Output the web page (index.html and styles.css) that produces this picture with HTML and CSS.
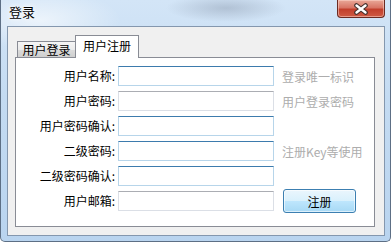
FILE: index.html
```html
<!DOCTYPE html>
<html lang="zh-CN">
<head>
  <meta charset="UTF-8" />
  <title>登录</title>
  <link rel="stylesheet" href="styles.css">
</head>
<body>
  <div class="window">
    <div class="titlebar">
      <span class="title">登录</span>
      <span class="close">
        <svg width="16" height="12" viewBox="0 0 16 12">
          <path d="M3.5 2.5 L12.5 9.5 M12.5 2.5 L3.5 9.5" stroke="#43302d" stroke-width="4.6" stroke-linecap="round"/>
          <path d="M3.5 2.5 L12.5 9.5 M12.5 2.5 L3.5 9.5" stroke="#fff" stroke-width="2.4" stroke-linecap="round"/>
        </svg>
      </span>
    </div>

    <div class="client">
      <div class="tabs">
        <div class="tab">用户登录</div>
        <div class="tab active">用户注册</div>
      </div>

      <div class="panel">
        <div class="form">
          <label>用户名称:</label>
          <input type="text" class="blue">
          <span class="hint">登录唯一标识</span>

          <label>用户密码:</label>
          <input type="password">
          <span class="hint">用户登录密码</span>

          <label>用户密码确认:</label>
          <input type="password" class="blue">
          <span></span>

          <label>二级密码:</label>
          <input type="password" class="blue">
          <span class="hint">注册Key等使用</span>

          <label>二级密码确认:</label>
          <input type="password" class="blue">
          <span></span>

          <label>用户邮箱:</label>
          <input type="text">
          <button>注册</button>
        </div>
      </div>
    </div>
  </div>
</body>
</html>
```

FILE: styles.css
```css
body {
  margin: 0;
  padding: 0;
  font-family: "Noto Sans CJK SC", "Liberation Sans", sans-serif;
  font-size: 12px;
  background: #fff;
}

.window {
  width: 391px;
  height: 242px;
  box-sizing: border-box;
  padding: 0 5px 0 6px;
  border-radius: 0 0 5px 5px;
  border: 1px solid #5d6f85;
  border-top: none;
  background:
    radial-gradient(ellipse 60px 14px at 225px 8px, rgba(150,165,185,0.55), transparent),
    radial-gradient(ellipse 80px 30px at 40px 20px, rgba(255,255,255,0.6), transparent),
    linear-gradient(180deg, #d3e5f7 0%, #c4dbf2 40%, #b9d4ef 100%);
}

.titlebar {
  height: 26px;
  display: flex;
  align-items: flex-start;
  justify-content: space-between;
}

.title {
  margin: 4px 0 0 2px;
  font-size: 13px;
  line-height: 16px;
  color: #000;
  text-shadow: 0 0 6px #fff, 0 0 3px #fff;
}

.close {
  width: 48px;
  height: 18px;
  box-sizing: border-box;
  border: 1px solid #6b2a22;
  border-top: none;
  border-radius: 0 0 4px 4px;
  background: linear-gradient(180deg, #e9a898 0%, #d87565 45%, #c23f2c 55%, #cf5a44 100%);
  box-shadow: inset 0 0 0 1px rgba(255,220,210,0.5);
  display: flex;
  align-items: center;
  justify-content: center;
}

.close svg {
  display: block;
}

.client {
  height: 210px;
  box-sizing: border-box;
  border: 1px solid #8497ae;
  background: #f0f0f0;
  padding-top: 8px;
}

.tabs {
  display: flex;
  align-items: flex-end;
  height: 22px;
  padding-left: 9px;
}

.tab {
  height: 16px;
  box-sizing: border-box;
  width: 59px;
  border: 1px solid #898c95;
  border-bottom: none;
  background: linear-gradient(180deg, #f5f5f5 0%, #ebebeb 50%, #dcdcdc 51%, #cfcfcf 100%);
  color: #000;
  text-align: center;
  line-height: 15px;
}

.tab.active {
  height: 23px;
  width: 64px;
  margin-left: -1px;
  margin-bottom: -1px;
  background: #fff;
  line-height: 20px;
  position: relative;
  z-index: 1;
}

.panel {
  margin-left: 7px;
  width: 360px;
  height: 170px;
  box-sizing: border-box;
  border: 1px solid #898c95;
  background: #fff;
}

.form {
  display: grid;
  grid-template-columns: 100px 156px 81px;
  column-gap: 2px;
  row-gap: 5px;
  grid-auto-rows: 20px;
  padding-top: 8px;
  align-items: center;
}

.form label {
  text-align: right;
  padding-right: 1px;
  color: #000;
  line-height: 20px;
}

.form input {
  width: 156px;
  height: 20px;
  box-sizing: border-box;
  margin: 0;
  border: 1px solid #dbdfe6;
  border-top-color: #abadb3;
  background: #fff;
  outline: none;
}

.form input.blue {
  border-color: #b7d5ea;
  border-top-color: #3d7bad;
}

.hint {
  padding-left: 6px;
  color: #adadad;
  white-space: nowrap;
}

.form button {
  margin-left: 7px;
  width: 73px;
  height: 24px;
  margin-top: -2px;
  margin-bottom: -2px;
  box-sizing: border-box;
  border: 1px solid #3c7fb1;
  border-radius: 3px;
  background: linear-gradient(180deg, #eaf6fd 0%, #d9f0fc 50%, #bee6fd 51%, #a7d9f5 100%);
  box-shadow: inset 0 0 0 1px rgba(255,255,255,0.6);
  font-family: inherit;
  font-size: 12px;
  color: #000;
  padding: 0;
}
```
